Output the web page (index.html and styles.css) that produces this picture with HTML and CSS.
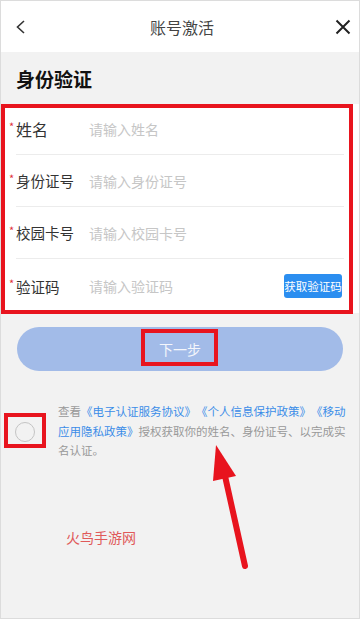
FILE: index.html
```html
<!DOCTYPE html>
<html lang="zh">
<head>
<meta charset="utf-8">
<title>账号激活</title>
<link rel="stylesheet" href="styles.css">
</head>
<body>
<div class="page">
  <header class="nav">
    <svg class="nav-icon back" width="24" height="24" viewBox="0 0 24 24"><path d="M15 6 L8.5 12 L15 18" fill="none" stroke="#333" stroke-width="1.6"/></svg>
    <div class="nav-title">账号激活</div>
    <svg class="nav-icon close" width="24" height="24" viewBox="0 0 24 24"><path d="M5.5 5.5 L18.5 18.5 M18.5 5.5 L5.5 18.5" fill="none" stroke="#222" stroke-width="2"/></svg>
  </header>

  <div class="section-title">身份验证</div>

  <div class="card">
    <div class="row">
      <span class="label big"><i class="star">*</i>姓名</span>
      <span class="placeholder">请输入姓名</span>
    </div>
    <div class="row">
      <span class="label"><i class="star">*</i>身份证号</span>
      <span class="placeholder">请输入身份证号</span>
    </div>
    <div class="row">
      <span class="label"><i class="star">*</i>校园卡号</span>
      <span class="placeholder">请输入校园卡号</span>
    </div>
    <div class="row last">
      <span class="label"><i class="star">*</i>验证码</span>
      <span class="placeholder">请输入验证码</span>
      <span class="code-btn">获取验证码</span>
    </div>
  </div>

  <div class="next-wrap">
    <div class="next-btn">下一步</div>
  </div>

  <div class="agree">
    <span class="check"></span>
    <p class="agree-text">查看<a class="link">《电子认证服务协议》</a><a class="link">《个人信息保护政策》</a><a class="link">《移动应用隐私政策》</a>授权获取你的姓名、身份证号、以完成实名认证。</p>
  </div>

  <div class="mark mark-form"></div>
  <div class="mark mark-btn"></div>
  <div class="mark mark-check"></div>

  <svg class="arrow" width="360" height="619" viewBox="0 0 360 619">
    <line x1="245" y1="566" x2="225" y2="476" stroke="#e8141e" stroke-width="6" stroke-linecap="round"/>
    <polygon points="216,445 213,481 236,476" fill="#e8141e"/>
  </svg>

  <div class="watermark">火鸟手游网</div>
</div>
</body>
</html>
```

FILE: styles.css
```css
* { box-sizing: border-box; }
html, body { margin: 0; padding: 0; }
body {
  font-family: "Noto Sans CJK SC", "Noto Sans", sans-serif;
  background: #f2f2f2;
}
.page {
  position: relative;
  width: 360px;
  height: 619px;
  background: #f2f2f2;
  border: 1px solid #dcdcdc;
  overflow: hidden;
}
.nav {
  height: 51px;
  background: #fff;
  display: flex;
  align-items: center;
  justify-content: space-between;
  padding: 0 4px 0 8px;
}
.nav-icon { display: block; }
.nav-title {
  font-size: 16px;
  color: #444;
}
.section-title {
  height: 52px;
  display: flex;
  align-items: center;
  padding-left: 15px;
  font-size: 19px;
  font-weight: bold;
  color: #111;
}
.card {
  background: #fff;
  padding: 0 15px;
  height: 209px;
}
.row {
  height: 52px;
  display: flex;
  align-items: center;
  border-bottom: 1px solid #ececec;
  position: relative;
}
.row:first-child { height: 51px; }
.row.last { border-bottom: none; height: 54px; }
.label {
  width: 73px;
  font-size: 14.5px;
  color: #333;
  position: relative;
}
.label.big { font-size: 16px; }
.star {
  position: absolute;
  left: -7px;
  top: 50%;
  margin-top: -9px;
  font-style: normal;
  font-size: 11px;
  line-height: 12px;
  color: #e0303a;
}
.placeholder {
  font-size: 14px;
  color: #c6c6c6;
  flex: 1;
}
.code-btn {
  background: #2b8ef0;
  color: #fff;
  font-size: 11.5px;
  border-radius: 3px;
  width: 58px;
  height: 24px;
  margin-right: 2px;
  display: flex;
  align-items: center;
  justify-content: center;
}
.next-wrap {
  padding: 14px 16px 0;
}
.next-btn {
  height: 44px;
  border-radius: 22px;
  background: #a2bbe8;
  color: #f4f6fb;
  font-size: 14px;
  display: flex;
  align-items: center;
  justify-content: center;
}
.agree {
  margin-top: 31px;
  display: flex;
  align-items: center;
  padding-left: 14px;
}
.check {
  width: 20px;
  height: 20px;
  border: 1px solid #c4c4c4;
  border-radius: 50%;
  flex: none;
  margin-right: 23px;
}
.agree-text {
  margin: 0;
  width: 290px;
  font-size: 11.5px;
  line-height: 19.7px;
  color: #999;
  text-spacing-trim: space-all;
  font-feature-settings: "halt" 0, "palt" 0;
}
.link { color: #3b8de8; }
.mark {
  position: absolute;
  border: 4.5px solid #e8141e;
}
.mark-form { left: 0; top: 103px; width: 352px; height: 210px; }
.mark-btn { left: 140px; top: 328px; width: 77px; height: 37px; border-width: 4px; }
.mark-check { left: 3px; top: 412px; width: 42px; height: 35px; border-width: 4.5px; }
.arrow { position: absolute; left: -1px; top: -1px; }
.watermark {
  position: absolute;
  left: 65px;
  top: 526px;
  font-size: 14px;
  color: #e05a5a;
  font-family: "Noto Sans CJK SC", serif;
}
```
